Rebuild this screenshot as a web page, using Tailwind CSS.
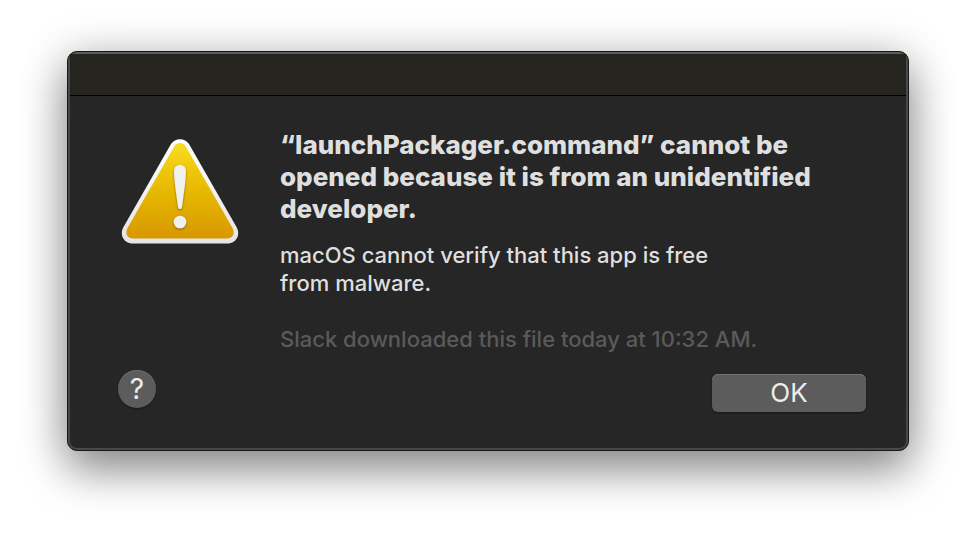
<!DOCTYPE html>
<html lang="en">
<head>
  <meta charset="UTF-8" />
  <meta name="viewport" content="width=device-width, initial-scale=1.0" />
  <title>Cannot open launchPackager.command</title>
  <script src="https://cdn.jsdelivr.net/npm/@tailwindcss/browser@4"></script>
</head>
<body class="min-h-screen bg-white px-4 py-[51px] font-['Inter','Liberation_Sans',sans-serif] overflow-hidden">
  <div role="alertdialog" aria-labelledby="title" aria-describedby="message"
    class="mx-auto w-full max-w-[842px] overflow-hidden rounded-[10px] border border-[#181818] bg-[#262626] shadow-[0_20px_44px_rgba(0,0,0,0.38),0_4px_48px_rgba(0,0,0,0.20)]">
    <div class="rounded-[9px] border-2 border-[#484848] border-t-[#5c5c5c]">
      <!-- Title bar -->
      <div class="h-[42px] border-b border-black bg-[#25241f]"></div>

      <div class="flex items-start gap-9 pt-8 pr-10 pl-[46px]">
        <svg class="size-32 shrink-0" viewBox="0 0 128 128" role="img" aria-label="Warning">
          <defs>
            <linearGradient id="fill" x1="0" y1="0" x2="0" y2="1">
              <stop offset="0" stop-color="#f8dc20" />
              <stop offset="0.5" stop-color="#e7b900" />
              <stop offset="1" stop-color="#d89700" />
            </linearGradient>
            <linearGradient id="rim" x1="0" y1="0" x2="0" y2="1">
              <stop offset="0" stop-color="#ffffff" />
              <stop offset="1" stop-color="#e4e4e4" />
            </linearGradient>
            <filter id="drop" x="-30%" y="-30%" width="160%" height="160%">
              <feDropShadow dx="0" dy="1" stdDeviation="0.8" flood-color="#5c4200" flood-opacity="0.7" />
            </filter>
          </defs>
          <path d="M55 16 C59 9.500 69 9.500 73 16 L120.500 99 C125 107 120 115.500 111.500 115.500 H16.500 C8 115.500 3 107 7.500 99 Z" fill="url(#rim)" />
          <path d="M58.500 18 C61 14 67 14 69.500 18 L116.500 100 C119.500 106 116.500 110.500 110.500 110.500 H17.500 C11.500 110.500 8.500 106 11.500 100 Z" fill="url(#fill)" />
          <g fill="#f0f0ee" filter="url(#drop)">
            <path d="M58 43 C58 35 70 35 70 43 C70 52 67.500 67 66 79 C65.700 81.500 62.300 81.500 62 79 C60.500 67 58 52 58 43 Z" />
            <circle cx="64" cy="94" r="6.300" />
          </g>
        </svg>

        <div class="min-w-0 flex-1 pt-px text-[#dfdfdf]">
          <h1 id="title" class="max-w-[550px] text-[26px] leading-8 font-extrabold">“launchPackager.command” cannot be opened because it is from an unidentified developer.</h1>
          <div id="message" class="mt-4 text-[22px] leading-7 font-medium">
            <p class="max-w-[460px]">macOS cannot verify that this app is free from malware.</p>
            <p class="mt-7 text-[#5a5a5a]">Slack downloaded this file today at 10:32 AM.</p>
          </div>
        </div>
      </div>

      <div class="flex items-start justify-between pt-[17px] pr-10 pb-9 pl-12">
        <button type="button" aria-label="Help"
          class="size-[38px] rounded-full bg-[#5c5c5c] text-[28px] leading-[38px] text-[#ececec] shadow-[0_1px_2px_rgba(0,0,0,0.4),inset_0_1px_0_#6c6c6c]">?</button>
        <button type="button"
          class="mt-1 h-[38px] w-[154px] rounded-md bg-[#5c5c5c] text-[26px] leading-[38px] text-[#ececec] shadow-[0_1px_2px_rgba(0,0,0,0.4),inset_0_1px_0_#747474]">OK</button>
      </div>
    </div>
  </div>
</body>
</html>
